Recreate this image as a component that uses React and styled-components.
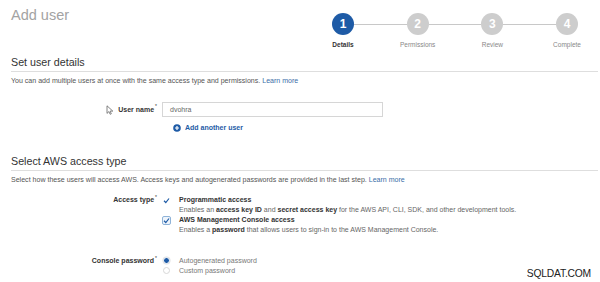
import React from 'react'
import styled, { createGlobalStyle } from 'styled-components'

const GlobalStyle = createGlobalStyle`
  body {
    margin: 0;
    background: #fff;
    font-family: "Liberation Sans", Arial, sans-serif;
  }
`

const Page = styled.div`
  position: relative;
  width: 600px;
  height: 282px;
  padding: 0 2px 0 10px;
  box-sizing: border-box;
  overflow: hidden;
  text-align: left;
`

const Header = styled.div`
  display: flex;
  justify-content: space-between;
  align-items: flex-start;
  height: 56px;
`

const Title = styled.h1`
  margin: 7px 0 0 1px;
  font-size: 14.5px;
  line-height: 16px;
  font-weight: normal;
  color: #a3a3a3;
`

const Stepper = styled.div`
  display: flex;
  width: 246px;
  margin: 13px 20px 0 0;
`

const Step = styled.div`
  display: flex;
  flex-direction: column;
  align-items: center;
  width: 22px;
`

const Circle = styled.div`
  display: flex;
  align-items: center;
  justify-content: center;
  width: 22px;
  height: 22px;
  border-radius: 50%;
  background: ${(p) => (p.active ? '#1e5ba6' : '#cdcdcd')};
  color: #fff;
  font-size: 12px;
  font-weight: bold;
`

const StepLabel = styled.div`
  margin-top: 5px;
  font-size: 6.5px;
  line-height: 9px;
  white-space: nowrap;
  color: ${(p) => (p.active ? '#333' : '#888')};
  font-weight: ${(p) => (p.active ? 'bold' : 'normal')};
`

const Connector = styled.div`
  flex: 1;
  height: 1px;
  margin-top: 11px;
  background: #c8c8c8;
`

const SectionHead = styled.h2`
  margin: ${(p) => p.top || 0}px 0 0 1px;
  padding-bottom: 2px;
  border-bottom: 1px solid #dedede;
  font-size: 10.7px;
  line-height: 13px;
  font-weight: normal;
  color: #333;
`

const Note = styled.p`
  margin: 4px 0 0 1px;
  font-size: 7.05px;
  line-height: 9px;
  color: #555;
`

const Link = styled.a`
  color: #3b6ea8;
  text-decoration: none;
`

const Row = styled.div`
  display: grid;
  grid-template-columns: 147px 1fr;
  column-gap: 5px;
  align-items: ${(p) => p.align || 'start'};
  margin-top: ${(p) => p.top || 0}px;
`

const Label = styled.div`
  display: flex;
  justify-content: flex-end;
  align-items: center;
  gap: 4px;
  font-size: 7px;
  line-height: 10px;
  font-weight: bold;
  color: #333;

  sup {
    font-size: 5px;
    line-height: 0;
    font-weight: normal;
    margin-left: 1px;
  }
`

const Input = styled.div`
  display: flex;
  align-items: center;
  justify-content: flex-start;
  width: 221px;
  height: 15px;
  box-sizing: border-box;
  border: 1px solid #d6d6d6;
  padding-left: 7px;
  font-size: 7px;
  color: #666;
`

const AddLink = styled.a`
  display: flex;
  align-items: center;
  gap: 4px;
  margin: 6px 0 0 163px;
  font-size: 7px;
  line-height: 9px;
  font-weight: bold;
  color: #1e5ba6;
`

const Options = styled.div`
  display: flex;
  flex-direction: column;
`

const Option = styled.div`
  display: grid;
  grid-template-columns: 17px 1fr;
  align-items: center;
  font-size: 7px;
  line-height: ${(p) => p.lh || 10}px;
`

const Check = styled.span`
  display: flex;
  align-items: center;
  justify-content: center;
  width: 9px;
  height: 9px;
  box-sizing: border-box;
  border: 1px solid ${(p) => (p.boxed ? '#8fb3d8' : 'transparent')};
  border-radius: 2px;
  background: ${(p) => (p.boxed ? '#eef4fb' : 'transparent')};
`

const OptTitle = styled.span`
  color: ${(p) => (p.muted ? '#777' : '#333')};
  font-weight: ${(p) => (p.muted ? 'normal' : 'bold')};
`

const OptDesc = styled.span`
  grid-column: 2;
  color: #666;

  b {
    color: #333;
  }
`

const Radio = styled.span`
  width: 7px;
  height: 7px;
  margin-left: 1px;
  box-sizing: border-box;
  border-radius: 50%;
  border: 1px solid ${(p) => (p.on ? '#fff' : '#d8d8d8')};
  background: ${(p) => (p.on ? '#1e5ba6' : '#fff')};
  box-shadow: ${(p) => (p.on ? '0 0 0 0.5px #e0e0e0' : 'none')};
`

const Watermark = styled.div`
  position: absolute;
  right: 9px;
  bottom: 3px;
  font-size: 10.3px;
  color: #222;
  letter-spacing: -0.2px;
`

const Pointer = () => (
  <svg width="8" height="10" viewBox="0 0 8 10">
    <path d="M1 0.8 L1 8.4 L2.9 6.6 L4.2 9.3 L5.3 8.8 L4.1 6.1 L6.8 6.1 Z" fill="#fff" stroke="#666" strokeWidth="0.8" strokeLinejoin="round" />
  </svg>
)

const PlusCircle = () => (
  <svg width="8" height="8" viewBox="0 0 8 8">
    <circle cx="4" cy="4" r="3.8" fill="#1e5ba6" />
    <path d="M4 2 V6 M2 4 H6" stroke="#fff" strokeWidth="1.2" />
  </svg>
)

const Tick = () => (
  <svg width="7" height="7" viewBox="0 0 7 7">
    <path d="M1 3.8 L2.8 5.5 L6 1.5" fill="none" stroke="#1e5ba6" strokeWidth="1.2" />
  </svg>
)

const steps = ['Details', 'Permissions', 'Review', 'Complete']

const App = () => (
  <Page>
    <GlobalStyle />
    <Header>
      <Title>Add user</Title>
      <Stepper>
        {steps.map((name, i) => (
          <React.Fragment key={name}>
            {i > 0 && <Connector />}
            <Step>
              <Circle active={i === 0}>{i + 1}</Circle>
              <StepLabel active={i === 0}>{name}</StepLabel>
            </Step>
          </React.Fragment>
        ))}
      </Stepper>
    </Header>

    <SectionHead>Set user details</SectionHead>
    <Note>
      You can add multiple users at once with the same access type and permissions. <Link>Learn more</Link>
    </Note>

    <Row align="center" top={17}>
      <Label>
        <Pointer />
        <span>User name<sup>*</sup></span>
      </Label>
      <Input>dvohra</Input>
    </Row>
    <AddLink>
      <PlusCircle />
      Add another user
    </AddLink>

    <SectionHead top={23}>Select AWS access type</SectionHead>
    <Note>
      Select how these users will access AWS. Access keys and autogenerated passwords are provided in the last step. <Link>Learn more</Link>
    </Note>

    <Row top={11}>
      <Label>
        <span>Access type<sup>*</sup></span>
      </Label>
      <Options>
        <Option>
          <Check><Tick /></Check>
          <OptTitle>Programmatic access</OptTitle>
          <OptDesc>
            Enables an <b>access key ID</b> and <b>secret access key</b> for the AWS API, CLI, SDK, and other development tools.
          </OptDesc>
        </Option>
        <Option>
          <Check boxed><Tick /></Check>
          <OptTitle>AWS Management Console access</OptTitle>
          <OptDesc>
            Enables a <b>password</b> that allows users to sign-in to the AWS Management Console.
          </OptDesc>
        </Option>
      </Options>
    </Row>

    <Row top={21}>
      <Label>
        <span>Console password<sup>*</sup></span>
      </Label>
      <Options>
        <Option lh={9.5}>
          <Radio on />
          <OptTitle muted>Autogenerated password</OptTitle>
        </Option>
        <Option lh={9.5}>
          <Radio />
          <OptTitle muted>Custom password</OptTitle>
        </Option>
      </Options>
    </Row>

    <Watermark>SQLDAT.COM</Watermark>
  </Page>
)

export default App
